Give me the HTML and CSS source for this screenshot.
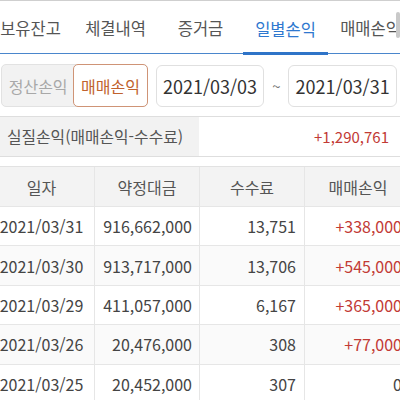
FILE: index.html
```html
<!DOCTYPE html>
<html lang="ko">
<head>
<meta charset="utf-8">
<link rel="stylesheet" href="styles.css">
</head>
<body>
<div class="screen">
  <nav class="tabs">
    <div class="tab">보유잔고</div>
    <div class="tab">체결내역</div>
    <div class="tab">증거금</div>
    <div class="tab active">일별손익</div>
    <div class="tab">매매손익</div>
  </nav>
  <div class="scroll-thumb"></div>

  <div class="filters">
    <div class="seg">
      <div class="seg-item">정산손익</div>
      <div class="seg-item on">매매손익</div>
    </div>
    <div class="date">2021/03/03</div>
    <div class="tilde">~</div>
    <div class="date">2021/03/31</div>
  </div>

  <div class="summary">
    <div class="sum-label">실질손익(매매손익-수수료)</div>
    <div class="sum-value">+1,290,761</div>
  </div>

  <div class="table">
    <div class="row head">
      <div class="c c1">일자</div>
      <div class="c c2">약정대금</div>
      <div class="c c3">수수료</div>
      <div class="c c4">매매손익</div>
    </div>
    <div class="row">
      <div class="c c1">2021/03/31</div>
      <div class="c c2">916,662,000</div>
      <div class="c c3">13,751</div>
      <div class="c c4 red">+338,000</div>
    </div>
    <div class="row alt">
      <div class="c c1">2021/03/30</div>
      <div class="c c2">913,717,000</div>
      <div class="c c3">13,706</div>
      <div class="c c4 red">+545,000</div>
    </div>
    <div class="row">
      <div class="c c1">2021/03/29</div>
      <div class="c c2">411,057,000</div>
      <div class="c c3">6,167</div>
      <div class="c c4 red">+365,000</div>
    </div>
    <div class="row alt">
      <div class="c c1">2021/03/26</div>
      <div class="c c2">20,476,000</div>
      <div class="c c3">308</div>
      <div class="c c4 red">+77,000</div>
    </div>
    <div class="row">
      <div class="c c1">2021/03/25</div>
      <div class="c c2">20,452,000</div>
      <div class="c c3">307</div>
      <div class="c c4">0</div>
    </div>
  </div>
</div>
</body>
</html>
```

FILE: styles.css
```css
html, body {
  margin: 0;
  padding: 0;
  background: #ffffff;
}
body {
  font-family: "Noto Sans CJK KR", "Noto Sans", sans-serif;
  color: #444;
  width: 400px;
  height: 400px;
  overflow: hidden;
}
.screen {
  position: relative;
  width: 400px;
  height: 400px;
  overflow: hidden;
  border-top: 1px solid #cfcfcf;
  box-sizing: border-box;
}
.tabs {
  display: flex;
  margin-left: -12px;
  width: 440px;
  height: 53px;
  border-bottom: 1px solid #4a86cc;
  box-sizing: border-box;
}
.tab {
  flex: 0 0 85px;
  height: 100%;
  display: flex;
  align-items: center;
  justify-content: center;
  font-size: 16.5px;
  color: #555;
  box-sizing: border-box;
  padding-top: 2px;
}
.tab.active {
  color: #2f78cf;
  border-bottom: 3px solid #2f74c8;
  padding-top: 5px;
  margin-bottom: -1px;
  height: 54px;
}
.scroll-thumb {
  position: absolute;
  right: 0;
  top: 11px;
  width: 4px;
  height: 26px;
  border-radius: 2px;
  background: #c9c9c9;
}
.filters {
  display: flex;
  align-items: center;
  padding: 10px 3px 0 1px;
  height: 43px;
}
.seg {
  display: flex;
  height: 43px;
  width: 147px;
  background: #f2f2f2;
  border: 1px solid #e2e2e2;
  border-radius: 5px;
  box-sizing: border-box;
}
.seg-item {
  flex: 1;
  display: flex;
  align-items: center;
  justify-content: center;
  font-size: 16px;
  color: #a8a8a8;
}
.seg-item.on {
  background: #fff;
  color: #c0622e;
  border: 1px solid #cf9476;
  border-radius: 5px;
  margin: -1px;
}
.date {
  margin-left: 8px;
  width: 109px;
  height: 42px;
  border: 1px solid #e0e0e0;
  border-radius: 6px;
  box-sizing: border-box;
  display: flex;
  align-items: center;
  justify-content: center;
  font-size: 18px;
  color: #333;
}
.tilde {
  width: 16px;
  margin-left: 4px;
  text-align: center;
  color: #777;
  font-size: 15px;
}
.filters .date:last-child {
  margin-left: 4px;
}
.summary {
  display: flex;
  margin-top: 9px;
  height: 41px;
  border-top: 1px solid #dedede;
  border-bottom: 1px solid #dedede;
  box-sizing: border-box;
}
.sum-label {
  width: 199px;
  background: #f2f2f2;
  display: flex;
  align-items: center;
  padding-left: 7px;
  box-sizing: border-box;
  font-size: 15.8px;
  color: #555;
}
.sum-value {
  flex: 1;
  display: flex;
  align-items: center;
  justify-content: flex-end;
  padding-right: 11px;
  font-size: 15px;
  color: #c23a35;
}
.table {
  margin-top: 9px;
  margin-left: -11px;
  width: 430px;
  border-top: 1px solid #e2e2e2;
}
.row {
  display: flex;
  height: 39.4px;
  border-bottom: 1px solid #e6e6e6;
  box-sizing: border-box;
}
.row.head {
  height: 40px;
  background: #f3f3f3;
}
.row.alt {
  background: #fafafa;
}
.c {
  display: flex;
  align-items: center;
  font-size: 16px;
  color: #444;
  box-sizing: border-box;
  border-right: 1px solid #e6e6e6;
}
.c1 { width: 106px; justify-content: center; }
.c2 { width: 105px; justify-content: flex-end; padding-right: 7px; }
.c3 { width: 105px; justify-content: flex-end; padding-right: 8px; }
.c4 { width: 107px; justify-content: flex-end; padding-right: 9px; }
.head .c {
  justify-content: center;
  padding-right: 0;
  font-size: 16px;
  color: #555;
}
.red { color: #c23a35; }
```
